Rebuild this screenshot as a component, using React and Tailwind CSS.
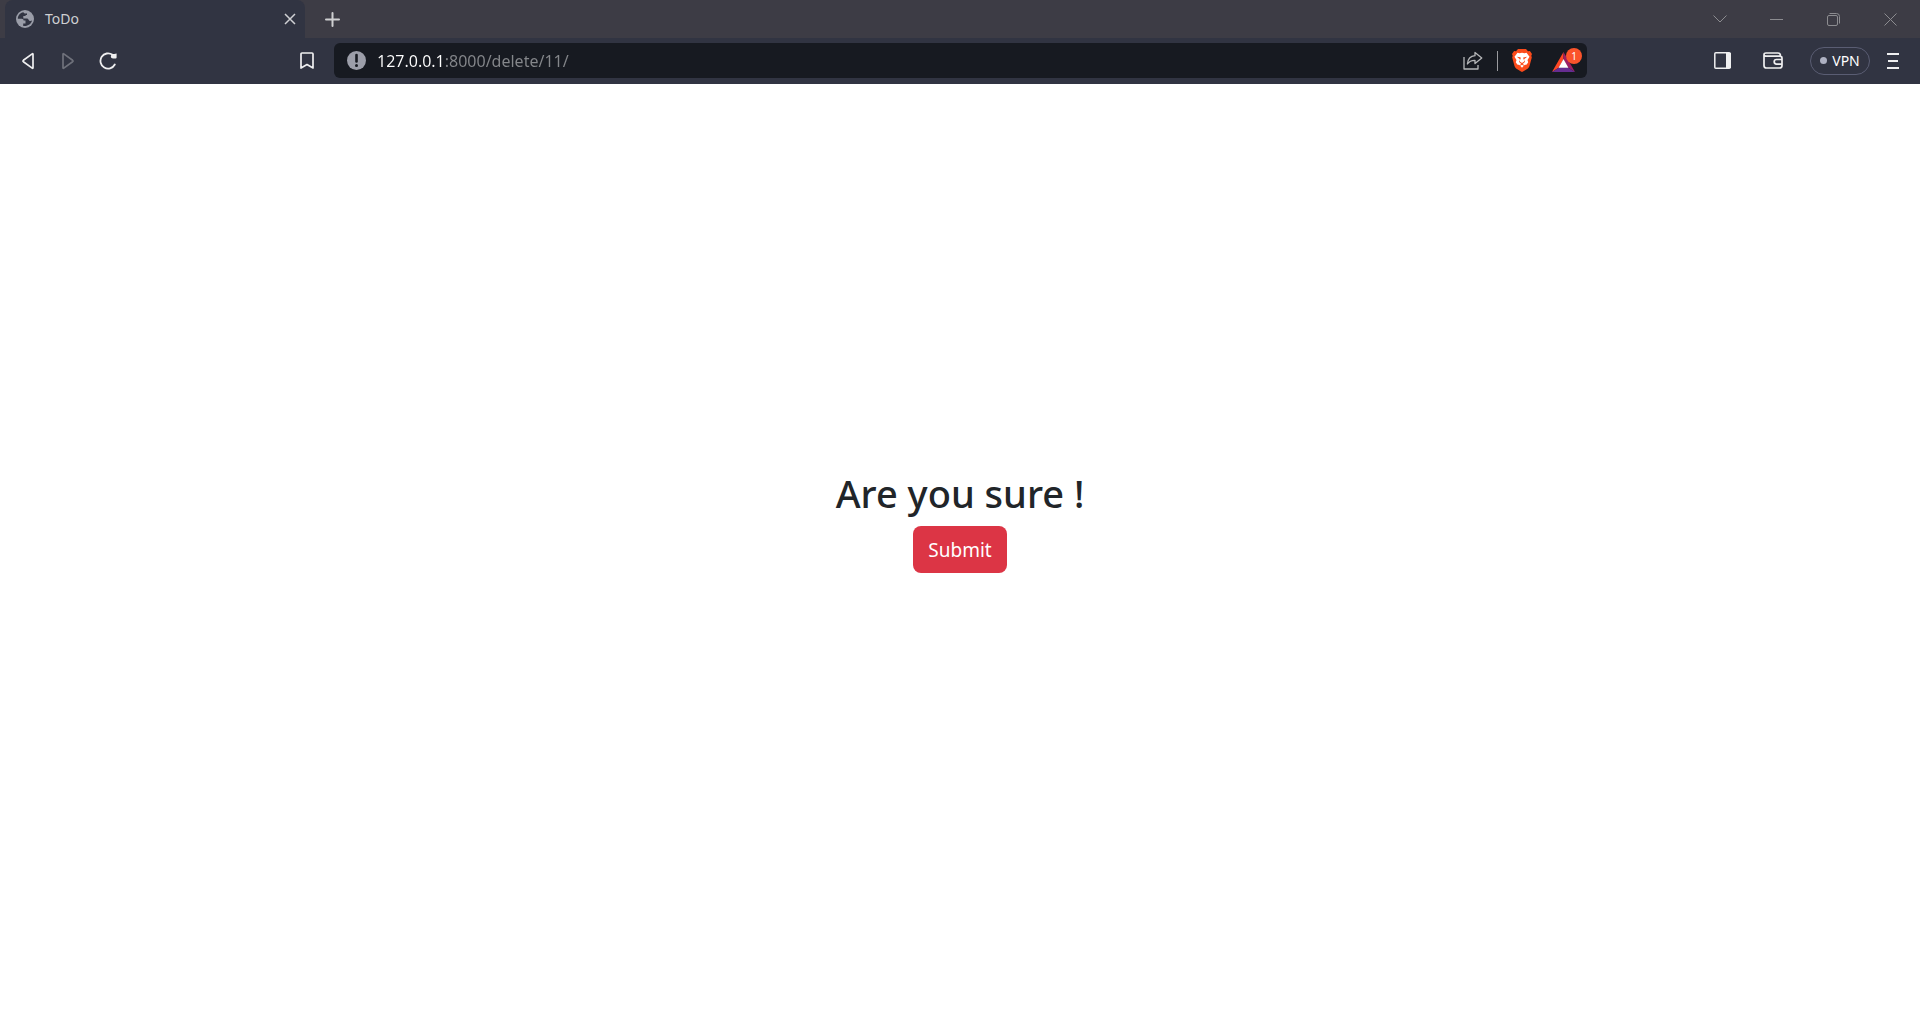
import React from "react";

function Globe() {
  return (
    <svg width="18" height="18" viewBox="0 0 18 18" aria-hidden="true">
      <circle cx="9" cy="9" r="9" fill="#9a9da8" />
      <path
        d="M7.4 2.2C4 2.9 1.8 5.6 1.8 8.7h3.9c1.5 0 1.9.9 1.9 1.9h1.900v2.800H7.200v2.500c3.700.9 8-1.500 8.800-5.300-1.600 1-2.900.3-3.400-.9-.4-.9-1-1.300-2.300-1.300H7.300V6.100h1.500c.8 0 .9-.5.9-1.200h1.300V3.300C9.300 3.700 8 3.500 7.400 2.200z"
        fill="#313442"
      />
    </svg>
  );
}

function TriangleIcon({ flip }) {
  return (
    <svg width="14" height="18" viewBox="0 0 14 18" fill="none" stroke="currentColor" strokeWidth="1.700" strokeLinejoin="round" aria-hidden="true">
      <path d={flip ? "M2 2.300v13.400q0 1 .8.4l8.800-6.400q.9-.7 0-1.400L2.800 1.900Q2 1.300 2 2.300z" : "M12 2.300v13.400q0 1-.8.4L2.400 9.700q-.9-.7 0-1.400l8.800-6.400q.8-.6.8.4z"} />
    </svg>
  );
}

function Reload() {
  return (
    <svg width="18" height="18" viewBox="0 0 18 18" fill="none" aria-hidden="true">
      <path d="M15.800 12.500A7.600 7.600 0 1 1 13.500 2.800" stroke="#efeff0" strokeWidth="1.800" strokeLinecap="round" />
      <path d="M17.600 1.500v4q0 1-1 1h-2.600q-2.200 0-2.200-2.100 0-2.200 2.200-2.400h1.200z" fill="#efeff0" />
    </svg>
  );
}

function Share() {
  return (
    <svg width="20" height="19" viewBox="0 0 20 19" fill="none" stroke="#b5b6b8" strokeWidth="1.300" strokeLinejoin="round" aria-hidden="true">
      <path d="M1 6v12h14v-4" />
      <path d="M12 1.500l6.800 5.400L12 12.500V9.300c-3.600-.1-5.800 1-7.600 3.700.4-5 3-7.900 7.600-8.300z" />
    </svg>
  );
}

function BraveLion() {
  return (
    <svg width="20" height="23" viewBox="0 0 20 23" aria-hidden="true">
      <path d="M6 0h8l2 2.300 1.900-.2L20 5l-.7 1.800.5 1.700-2.300 8.600q-.4 1.500-1.600 2.400L11 22.600q-1 .6-2 0l-4.900-3.100q-1.200-.9-1.600-2.400L.2 8.500l.5-1.700L0 5l2.100-2.900L4 2.300z" fill="#fb4b1b" />
      <path d="M5.500 3.800l2 .4 2.500-.5 2.500.5 2-.4 3 4-2 3.200.7 2.300-1.500 2.200-2.200.5L10 18.800 7.500 16l-2.200-.5-1.500-2.200.7-2.300-2-3.200z" fill="#fff" />
      <path d="M4.800 7.700l3.700.6.2 1.500-.7 1.100L7.600 10z M15.200 7.700l-3.700.6-.2 1.500.7 1.100.4-.9z" fill="#fb4b1b" />
      <path d="M7.600 11l.5 1.800L10 14l1.900-1.200.5-1.800.5 2-2.200 2 1.500 1-.7.7L10 15.700l-1.500 1-.7-.7 1.500-1-2.200-2z" fill="#fb4b1b" />
    </svg>
  );
}

function BatTriangle() {
  return (
    <svg width="23" height="20" viewBox="0 0 23 20" aria-hidden="true">
      <path d="M11.500 0L0 20l7-4.500 4.500-8.500z" fill="#ff4724" />
      <path d="M11.500 0L23 20l-7-4.500-4.500-8.500z" fill="#9e1f63" />
      <path d="M0 20h23l-7-4.500H7z" fill="#662d91" />
      <path d="M11.500 7l4.900 8.700H6.600z" fill="#fff" />
    </svg>
  );
}

function Wallet() {
  return (
    <svg width="20" height="17" viewBox="0 0 20 17" fill="none" stroke="#efeff0" strokeWidth="1.700" aria-hidden="true">
      <path d="M1 3v10.500Q1 16 3.500 16h13q2.500 0 2.500-2.500V6.200q0-2-2.300-2H3Q1 4.200 1 2.600T3 1h12q2.500 0 2.500 3" />
      <path d="M19 7.500h-5.500a2.300 2.300 0 0 0 0 4.600H19" />
    </svg>
  );
}

function TabStrip() {
  return (
    <header className="flex h-[38px] items-center bg-[#3d3c45] pl-[5px]">
      <div className="flex h-full w-[300px] items-center rounded-t-lg bg-[#313442] pr-[9px] pl-[11px]">
        <Globe />
        <span className="ml-[11px] flex-1 text-sm leading-5 text-[#cfd0d3]">ToDo</span>
        <button type="button" aria-label="Close tab" className="text-[#cfd0d3]">
          <svg width="12" height="12" viewBox="0 0 12 12" stroke="currentColor" strokeWidth="1.500" aria-hidden="true">
            <path d="M1 1l10 10M11 1L1 11" />
          </svg>
        </button>
      </div>
      <button type="button" aria-label="New tab" className="ml-5 text-[#cfcfd1]">
        <svg width="15" height="15" viewBox="0 0 15 15" stroke="currentColor" strokeWidth="2" strokeLinecap="round" aria-hidden="true">
          <path d="M7.500 1v13M1 7.500h13" />
        </svg>
      </button>
      <div className="ml-auto flex h-full pr-px text-[#8c8c90]">
        <button type="button" aria-label="Search tabs" className="grid w-[57px] place-items-center">
          <svg width="14" height="8" viewBox="0 0 14 8" fill="none" stroke="currentColor" aria-hidden="true">
            <path d="M.5.5L7 7 13.500.5" />
          </svg>
        </button>
        <button type="button" aria-label="Minimize" className="grid w-[57px] place-items-center">
          <svg width="13" height="1" aria-hidden="true">
            <rect width="13" height="1" fill="currentColor" />
          </svg>
        </button>
        <button type="button" aria-label="Restore" className="grid w-[57px] place-items-center">
          <svg width="13" height="13" viewBox="0 0 13 13" fill="none" stroke="currentColor" aria-hidden="true">
            <rect x=".5" y="2.500" width="10" height="10" rx="1.500" />
            <path d="M2.500.5h7q3 0 3 3v7" />
          </svg>
        </button>
        <button type="button" aria-label="Close window" className="grid w-[57px] place-items-center">
          <svg width="13" height="13" viewBox="0 0 13 13" stroke="currentColor" aria-hidden="true">
            <path d="M.5.5l12 12M12.500.5l-12 12" />
          </svg>
        </button>
      </div>
    </header>
  );
}

function Toolbar() {
  return (
    <nav className="flex h-[46px] items-center bg-[#313442] px-[21px] pb-px">
      <div className="flex items-center text-[#efeff0]">
        <button type="button" aria-label="Back"><TriangleIcon /></button>
        <button type="button" aria-label="Forward" className="ml-[26px] text-[#6f717b]"><TriangleIcon flip /></button>
        <button type="button" aria-label="Reload" className="ml-6"><Reload /></button>
      </div>
      <button type="button" aria-label="Bookmark this page" className="ml-[183px] text-[#efeff0]">
        <svg width="14" height="17" viewBox="0 0 14 17" fill="none" stroke="currentColor" strokeWidth="1.700" strokeLinejoin="round" aria-hidden="true">
          <path d="M1 2q0-1 1-1h10q1 0 1 1v14l-6-3.500L1 16z" />
        </svg>
      </button>
      <div className="mr-[127px] ml-5 flex h-[35px] flex-1 items-center rounded-md bg-[#171a21] pr-[5px] pl-[13px]">
        <button type="button" aria-label="Site information">
          <svg width="19" height="19" viewBox="0 0 19 19" aria-hidden="true">
            <circle cx="9.500" cy="9.500" r="9.500" fill="#9c9ea9" />
            <path d="M9.500 4v6.500" stroke="#171a21" strokeWidth="2.600" strokeLinecap="round" />
            <circle cx="9.500" cy="14.500" r="1.500" fill="#171a21" />
          </svg>
        </button>
        <input
          type="text"
          aria-label="Address"
          defaultValue="127.0.0.1:8000/delete/11/"
          className="ml-[11px] h-6 min-w-0 flex-1 bg-[linear-gradient(90deg,#ffffff_68px,#85878b_68px)] bg-clip-text text-base leading-6 text-transparent caret-white outline-none"
        />
        <button type="button" aria-label="Share"><Share /></button>
        <span className="mx-[14px] h-5 w-px bg-[#9a9b9f]" />
        <button type="button" aria-label="Brave Shields"><BraveLion /></button>
        <button type="button" aria-label="Brave Rewards" className="relative ml-5 flex h-[26px] w-[30px] items-end pb-[2px]">
          <BatTriangle />
          <span className="absolute top-0 right-0 grid size-4 place-items-center rounded-full bg-[#fb542b] text-[10px] leading-none text-white">1</span>
        </button>
      </div>
      <div className="flex items-center text-[#efeff0]">
        <button type="button" aria-label="Sidebar">
          <svg width="17" height="17" viewBox="0 0 17 17" aria-hidden="true">
            <rect x=".8" y=".8" width="15.400" height="15.400" rx="1" fill="none" stroke="currentColor" strokeWidth="1.500" />
            <rect x="12" y="1" width="5" height="15" fill="currentColor" />
          </svg>
        </button>
        <button type="button" aria-label="Wallet" className="ml-8"><Wallet /></button>
        <button type="button" className="ml-[27px] flex h-7 w-[60px] items-center justify-center gap-[5px] rounded-full border border-[#5a5d73] text-sm text-white">
          <span className="size-[7px] rounded-full bg-[#aeb1c2]" />
          VPN
        </button>
        <button type="button" aria-label="Menu" className="ml-[17px]">
          <svg width="12" height="16" viewBox="0 0 12 16" stroke="currentColor" strokeWidth="2" aria-hidden="true">
            <path d="M0 1h12M1 8h10M0 15h12" />
          </svg>
        </button>
      </div>
    </nav>
  );
}

export default function App() {
  return (
    <div className="flex min-h-screen flex-col bg-white font-['Noto_Sans',sans-serif]">
      <TabStrip />
      <Toolbar />
      <main className="flex flex-1 flex-col items-center justify-center gap-2.5 pb-[58px]">
        <h1 className="text-[38px] leading-[46px] font-medium text-[#212529]">Are you sure !</h1>
        <button type="submit" className="rounded-lg bg-[#dc3545] px-[15px] pt-[9px] pb-[7px] text-[19px] leading-[31px] text-white">
          Submit
        </button>
      </main>
    </div>
  );
}
